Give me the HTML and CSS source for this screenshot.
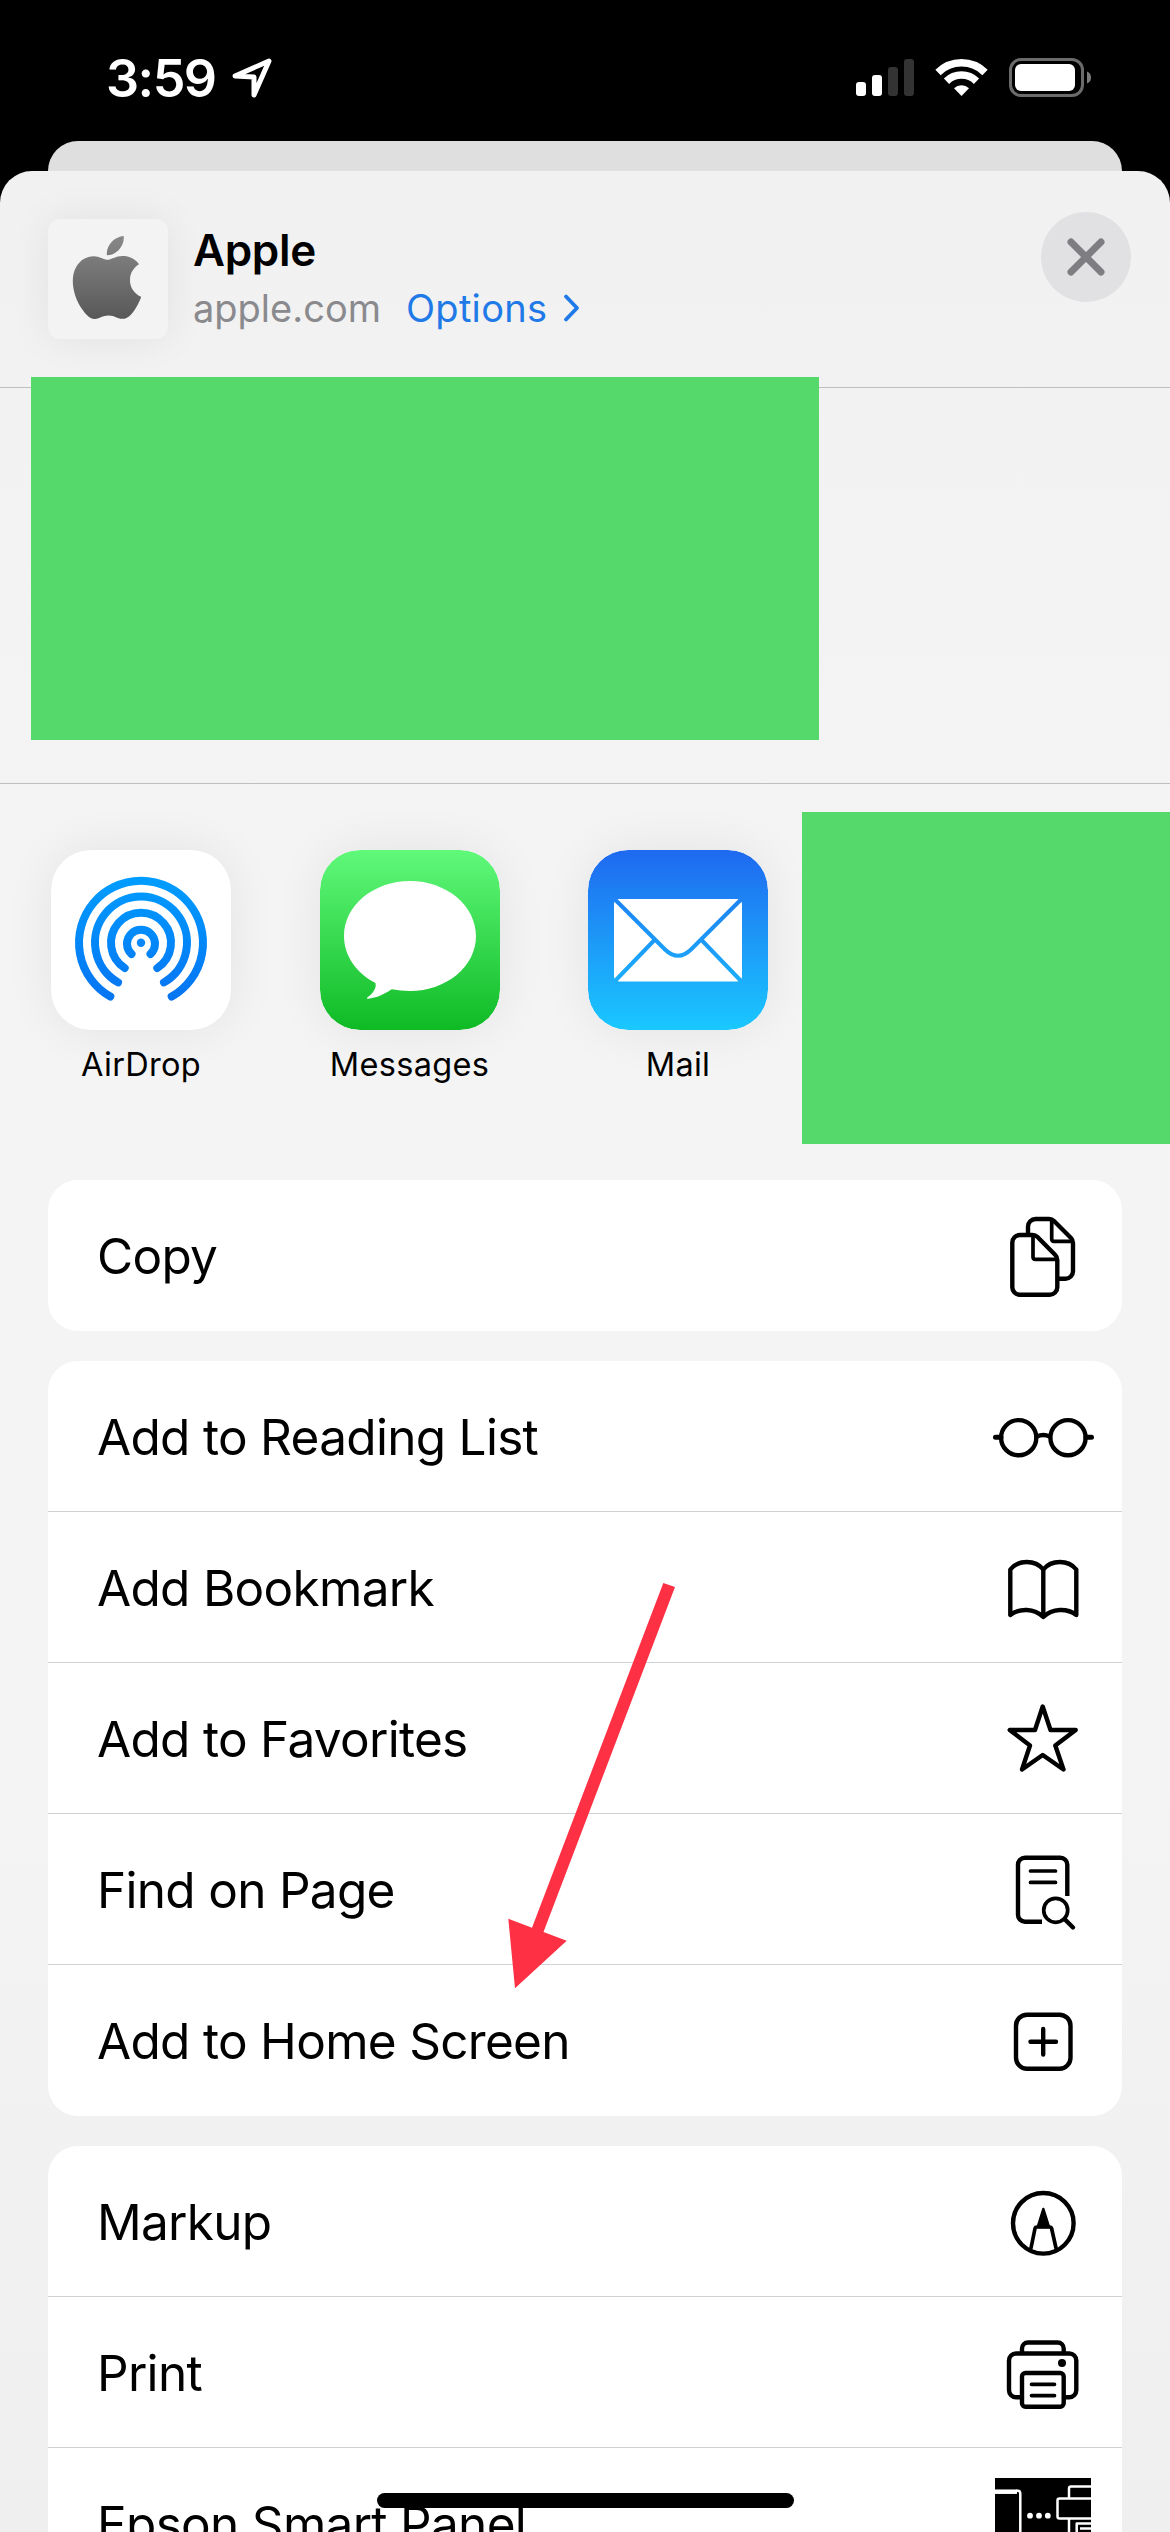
FILE: index.html
```html
<!DOCTYPE html>
<html lang="en">
<head>
  <meta charset="UTF-8">
  <meta name="viewport" content="width=device-width, initial-scale=1.0">
  <title>Share Sheet</title>
  <link rel="stylesheet" href="styles.css">
</head>
<body>

  <div class="screen">
    <!-- Status bar -->
    <div class="status-bar">
      <div class="status-left">
        <span class="time">3:59</span>
        <svg class="location" width="44" height="44" viewBox="0 0 44 44">
          <path d="M5 20 39 5 24 39V21Z" fill="none" stroke="#fff" stroke-width="5" stroke-linejoin="round"/>
        </svg>
      </div>
      <svg class="status-icons" width="240" height="44" viewBox="0 0 240 44">
        <rect x="4" y="26" width="10" height="14" rx="3" fill="#fff"/>
        <rect x="20" y="19" width="10" height="21" rx="3" fill="#fff"/>
        <rect x="36" y="11" width="10" height="29" rx="3" fill="#333"/>
        <rect x="52" y="3" width="10" height="37" rx="3" fill="#333"/>
        <g fill="none" stroke="#fff" stroke-width="7.5">
          <path d="M86 16.5a33.5 33.5 0 0 1 47 0"/>
          <path d="M94.5 25.2a21.5 21.5 0 0 1 30 0"/>
        </g>
        <path d="M109.500 40 102 32.200a11 11 0 0 1 15 0z" fill="#fff"/>
        <rect x="158.500" y="3.500" width="72" height="36" rx="10.500" fill="none" stroke="#6b6b6b" stroke-width="3"/>
        <rect x="163" y="8" width="60" height="27" rx="6" fill="#fff"/>
        <path d="M235 15.500q4 1.500 4 6t-4 6z" fill="#7b7b7b"/>
      </svg>
    </div>

    <div class="back-card"></div>

    <div class="sheet">
      <!-- Page being shared -->
      <div class="header">
        <div class="favicon">
          <svg width="84" height="83" viewBox="0 0 24 24" preserveAspectRatio="none">
            <defs>
              <linearGradient id="gray" x1="0" y1="0" x2="0" y2="1">
                <stop offset="0" stop-color="#888"/>
                <stop offset="1" stop-color="#585858"/>
              </linearGradient>
            </defs>
            <path fill="url(#gray)" d="M12.152 6.896c-.948 0-2.415-1.078-3.960-1.040-2.040.027-3.910 1.183-4.961 3.014-2.117 3.675-.546 9.103 1.519 12.090 1.013 1.454 2.208 3.090 3.792 3.039 1.520-.065 2.090-.987 3.935-.987 1.831 0 2.350.987 3.960.948 1.637-.026 2.676-1.480 3.676-2.948 1.156-1.688 1.636-3.325 1.662-3.415-.039-.013-3.182-1.221-3.220-4.857-.026-3.040 2.480-4.494 2.597-4.559-1.429-2.090-3.623-2.324-4.390-2.376-2-.156-3.675 1.090-4.610 1.090zM15.530 3.830c.843-1.012 1.400-2.427 1.245-3.830-1.207.052-2.662.805-3.532 1.818-.780.896-1.454 2.338-1.273 3.714 1.338.104 2.715-.688 3.559-1.701"/>
          </svg>
        </div>
        <div class="page-info">
          <div class="page-title">Apple</div>
          <div class="page-sub">
            <span class="domain">apple.com</span>
            <a class="options">Options</a>
            <svg width="18" height="30" viewBox="0 0 18 30">
              <path d="M3 3.500 14 15 3 26.500" fill="none" stroke="#1f7ae8" stroke-width="3.800" stroke-linecap="round" stroke-linejoin="round"/>
            </svg>
          </div>
        </div>
        <div class="close">
          <svg width="44" height="44" viewBox="0 0 44 44">
            <path d="M7 7 37 37M37 7 7 37" stroke="#7d7d82" stroke-width="7" stroke-linecap="round"/>
          </svg>
        </div>
      </div>

      <!-- Contacts, hidden -->
      <div class="contacts">
        <div class="contacts-cover"></div>
      </div>

      <!-- Apps -->
      <div class="apps">
        <div class="app">
          <svg class="app-icon" width="180" height="180" viewBox="0 0 180 180">
            <defs>
              <linearGradient id="air" gradientUnits="userSpaceOnUse" x1="0" y1="27" x2="0" y2="150">
                <stop offset="0" stop-color="#009dff"/>
                <stop offset="1" stop-color="#0674f2"/>
              </linearGradient>
            </defs>
            <rect width="180" height="180" rx="40" fill="#fff"/>
            <g fill="none" stroke="url(#air)" stroke-width="8" stroke-linecap="round">
              <path d="M59.300 146.600a62 62 0 1 1 61.400 0"/>
              <path d="M67 132.400a46 46 0 1 1 46 0"/>
              <path d="M73.700 118a30 30 0 1 1 32.600 0"/>
              <path d="M80.500 104a14 14 0 1 1 19 0"/>
            </g>
            <circle cx="90" cy="92.700" r="4.200" fill="#0a87f8"/>
          </svg>
          <span class="app-name">AirDrop</span>
        </div>
        <div class="app">
          <svg class="app-icon" width="180" height="180" viewBox="0 0 180 180">
            <defs>
              <linearGradient id="msg" x1="0" y1="0" x2="0" y2="1">
                <stop offset="0" stop-color="#60f97a"/>
                <stop offset="1" stop-color="#0fba25"/>
              </linearGradient>
            </defs>
            <rect width="180" height="180" rx="40" fill="url(#msg)"/>
            <path d="M90 31c36.500 0 66 24.600 66 55s-29.500 55-66 55q-9.500 0-18.300-1.700c-7 4.700-15 8.700-24 9.500-1 0-1-.800-.300-1.300 5-3.500 9.600-9.500 8-14.500C36.500 123 24 106 24 86c0-30.400 29.500-55 66-55z" fill="#fff"/>
          </svg>
          <span class="app-name">Messages</span>
        </div>
        <div class="app">
          <svg class="app-icon" width="180" height="180" viewBox="0 0 180 180">
            <defs>
              <linearGradient id="mail" gradientUnits="userSpaceOnUse" x1="0" y1="0" x2="0" y2="180">
                <stop offset="0" stop-color="#1f69f0"/>
                <stop offset="1" stop-color="#1ac8ff"/>
              </linearGradient>
            </defs>
            <rect width="180" height="180" rx="40" fill="url(#mail)"/>
            <rect x="26" y="49" width="128" height="82.500" rx="5" fill="#fff"/>
            <path d="M27 49.500 77 99.500Q90 112 103 99.500L153 49.500M27 131 66 90.500M153 131 114 90.500" fill="none" stroke="url(#mail)" stroke-width="4"/>
          </svg>
          <span class="app-name">Mail</span>
        </div>
        <div class="apps-cover"></div>
      </div>

      <!-- Actions -->
      <div class="actions">
        <div class="group">
          <div class="row">
            <span class="label">Copy</span>
            <svg class="icon" viewBox="0 0 120 150">
              <path d="M45 54V46.500a7.500 7.500 0 0 1 7.500-7.500H66q3 0 5 2L88 58q2 2 2 5v28.200a7.500 7.500 0 0 1-7.500 7.500H76"/>
              <path class="thin" d="M68.700 39.500V59q0 2.300 2.300 2.300h18"/>
              <path d="M49.500 55H36.800a7.500 7.500 0 0 0-7.500 7.500v44.700a7.500 7.500 0 0 0 7.500 7.500h30a7.500 7.500 0 0 0 7.500-7.500V80q0-3-2-5L54.500 57q-2-2-5-2z"/>
              <path class="thin" d="M50 56V77q0 2.300 2.300 2.300H74"/>
            </svg>
          </div>
        </div>

        <div class="group">
          <div class="row">
            <span class="label">Add to Reading List</span>
            <svg class="icon" viewBox="0 0 120 150">
              <circle cx="35.700" cy="76.700" r="17.600"/>
              <circle cx="85" cy="76.700" r="17.600"/>
              <path d="M54 75.500q6.300-3 12.600 0"/>
              <path d="M12.500 76.300H18M103 76.300h5.500" stroke-width="5"/>
            </svg>
          </div>
          <div class="row">
            <span class="label">Add Bookmark</span>
            <svg class="icon" viewBox="0 0 120 150">
              <path d="M27.300 103V57.500c8-10 25-10 33 0 8-10 25-10 33 0V103c-9-7-24-7-33 2-9-9-24-9-33-2z"/>
              <path d="M60.300 58v46"/>
            </svg>
          </div>
          <div class="row">
            <span class="label">Add to Favorites</span>
            <svg class="icon" viewBox="0 0 120 150">
              <path d="M59.700 43.500 67.500 67H92.700L72.300 82.500 80.500 106.500 59.700 92 39 106.500 47 82.500 26.700 67H52Z"/>
            </svg>
          </div>
          <div class="row">
            <span class="label">Find on Page</span>
            <svg class="icon" viewBox="0 0 120 150">
              <g stroke-linecap="butt">
                <path d="M84.300 82V50.700a7 7 0 0 0-7-7H42a7 7 0 0 0-7 7v50a7 7 0 0 0 7 7H59"/>
              </g>
              <path class="thin" d="M47.500 57H72.500M47.500 68.400H72.500"/>
              <circle class="thin" cx="72.700" cy="96.300" r="12"/>
              <path d="M81.500 105 90 113.500"/>
            </svg>
          </div>
          <div class="row">
            <span class="label">Add to Home Screen</span>
            <svg class="icon" viewBox="0 0 120 150">
              <rect x="33" y="49.700" width="54.500" height="54" rx="11"/>
              <path d="M60.200 64V89.500M47.500 76.700H73"/>
            </svg>
          </div>
        </div>

        <div class="group">
          <div class="row">
            <span class="label">Markup</span>
            <svg class="icon" viewBox="0 0 120 150">
              <circle cx="60.300" cy="77.300" r="30.300"/>
              <path class="thin" d="M48 102 52 82.500Q52.300 81 54 81H66.600Q68.300 81 68.600 82.500L73 102"/>
              <path d="M60.300 63 66 81H54.700Z" fill="#000" stroke-width="2.500"/>
            </svg>
          </div>
          <div class="row">
            <span class="label">Print</span>
            <svg class="icon" viewBox="0 0 120 150">
              <path d="M39 55V51.500a6 6 0 0 1 6-6H74.700a6 6 0 0 1 6 6V55"/>
              <path d="M39 100.300H33a7 7 0 0 1-7-7V63.500a7 7 0 0 1 7-7H86.300a7 7 0 0 1 7 7V93.300a7 7 0 0 1-7 7H81"/>
              <rect x="39" y="76" width="41.700" height="33.700" rx="3.500"/>
              <path class="thin" d="M48.500 87.300H71.500M48.500 98.600H71.500"/>
              <circle cx="79" cy="66" r="4" fill="#000" stroke="none"/>
            </svg>
          </div>
          <div class="row">
            <span class="label">Epson Smart Panel</span>
            <svg class="icon" viewBox="0 0 120 150">
              <rect x="12" y="30" width="96" height="96" fill="#000" stroke="none"/>
              <g stroke="#fff" stroke-width="2.500" stroke-linecap="butt">
                <path d="M12 43.700H34" stroke-width="4.500"/>
                <path d="M33 42.800H35Q37.300 42.800 37.300 46V110"/>
                <path d="M108 38.500H88Q86 38.500 86 40.500V50"/>
                <path d="M108 50.500H76.500Q74.500 50.500 74.500 52.500V68.500Q74.500 70.500 76.500 70.500H108"/>
                <path d="M86 71V100"/>
                <path d="M108 75.500H93.700V100M97 80.500H108"/>
              </g>
              <g fill="#fff" stroke="none">
                <circle cx="47" cy="67.700" r="2.900"/>
                <circle cx="56" cy="67.700" r="2.900"/>
                <circle cx="64.800" cy="67.700" r="2.900"/>
              </g>
            </svg>
          </div>
        </div>
      </div>
    </div>

    <!-- Arrow pointing at "Add to Home Screen" -->
    <svg class="arrow" width="180" height="416" viewBox="500 1578 180 416">
      <path d="M663.300 1583 675 1587 543.500 1932 566.700 1940.700 515 1988.300 508.300 1918.700 532 1927.700Z" fill="#fd3044"/>
    </svg>

    <div class="home-indicator"></div>
  </div>

</body>
</html>
```
FILE: styles.css
```css
/* General */
* {
  box-sizing: border-box;
}

body {
  margin: 0;
  background-color: #000;
  font-family: Inter, "Liberation Sans", sans-serif;
  color: #000;
}

.screen {
  position: relative;
  width: 1170px;
  height: 2532px;
  overflow: hidden;
  background-color: #000;
}

/* Status bar */
.status-bar {
  display: flex;
  justify-content: space-between;
  height: 141px;
  padding: 56px 78px 0 106px;
}

.status-left {
  display: flex;
  gap: 14px;
}

.time {
  color: #fff;
  font-size: 52px;
  font-weight: 600;
  line-height: 45px;
  letter-spacing: -1.5px;
}

/* Cards */
.back-card {
  height: 60px;
  margin: 0 48px -30px;
  border-radius: 30px 30px 0 0;
  background-color: #dfdfdf;
}

.sheet {
  position: relative;
  height: 2361px;
  border-radius: 32px 32px 0 0;
  background: linear-gradient(#f1f1f1, #f4f4f5 30%, #f4f4f5 65%, #efefef);
}

/* Header */
.header {
  display: flex;
  height: 217px;
  padding: 48px 39px 0 48px;
  border-bottom: 1px solid #bfbfc2;
}

.favicon {
  display: flex;
  justify-content: center;
  width: 120px;
  height: 120px;
  padding-top: 17px;
  padding-right: 2px;
  border-radius: 12px;
  background-color: #f3f3f3;
  box-shadow: 0 0 40px rgba(0, 0, 0, 0.07);
}

.page-info {
  flex: 1;
  padding-left: 25px;
}

.page-title {
  margin-top: 4px;
  font-size: 44px;
  font-weight: 600;
  line-height: 54px;
  letter-spacing: -0.3px;
}

.page-sub {
  display: flex;
  align-items: center;
  margin-top: 5px;
  font-size: 38px;
  line-height: 52px;
}

.domain {
  color: #8a8a8e;
}

.options {
  margin-left: 25px;
  margin-right: 16px;
  color: #1f7ae8;
  letter-spacing: 0.3px;
}

.close {
  display: flex;
  align-items: center;
  justify-content: center;
  width: 90px;
  height: 90px;
  margin-top: -7px;
  border-radius: 50%;
  background-color: #e1e1e3;
}

/* Contacts */
.contacts {
  height: 396px;
  border-bottom: 1px solid #bfbfc2;
}

.contacts-cover {
  position: relative;
  top: -11px;
  width: 788px;
  height: 363px;
  margin-left: 31px;
  background-color: #55d96a;
}

/* Apps */
.apps {
  display: flex;
  gap: 88.5px;
  height: 396px;
  padding: 66px 0 0 51px;
}

.app {
  display: flex;
  flex-direction: column;
  align-items: center;
  width: 180px;
}

.app-icon {
  border-radius: 40px;
  box-shadow: 0 0 50px rgba(0, 0, 0, 0.07);
}

.app-name {
  margin-top: 14px;
  font-size: 32.5px;
  line-height: 42px;
  letter-spacing: 0.3px;
}

.apps-cover {
  flex: 1;
  height: 332px;
  margin-top: -38px;
  margin-left: -55px;
  background-color: #55d96a;
}

/* Actions */
.actions {
  display: flex;
  flex-direction: column;
  gap: 30px;
  padding: 0 48px;
}

.group {
  border-radius: 30px;
  background-color: #fff;
  overflow: hidden;
}

.row {
  display: flex;
  align-items: center;
  justify-content: space-between;
  height: 151px;
  padding: 0 19px 0 49px;
  border-bottom: 1px solid #d1d1d3;
}

.row:last-child {
  border-bottom-color: transparent;
}

.label {
  padding-top: 2px;
  font-size: 49.5px;
  line-height: 60px;
  letter-spacing: -0.7px;
}

.icon {
  width: 120px;
  height: 150px;
  fill: none;
  stroke: #000;
  stroke-width: 4.4;
  stroke-linecap: round;
  stroke-linejoin: round;
}

.icon .thin {
  stroke-width: 3.7;
}

/* Overlays */
.arrow {
  position: absolute;
  left: 500px;
  top: 1578px;
}

.home-indicator {
  position: absolute;
  left: 377px;
  top: 2493px;
  width: 417px;
  height: 15px;
  border-radius: 8px;
  background-color: #000;
}
```
